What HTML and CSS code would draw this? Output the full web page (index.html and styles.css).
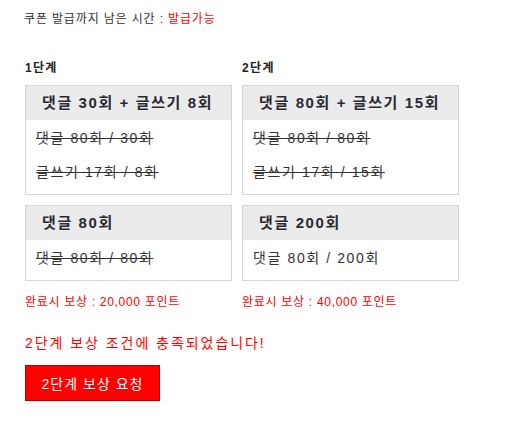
FILE: index.html
```html
<!DOCTYPE html>
<html lang="ko">
<head>
<meta charset="utf-8">
<link rel="stylesheet" href="styles.css">
</head>
<body>
<div class="page">
  <p class="timer">쿠폰 발급까지 남은 시간 : <span class="red">발급가능</span></p>
  <div class="steps">
    <div class="col">
      <div class="label">1단계</div>
      <div class="box">
        <div class="head">댓글 30회 + 글쓰기 8회</div>
        <div class="body">
          <div class="line done">댓글 80회 / 30회</div>
          <div class="line done">글쓰기 17회 / 8회</div>
        </div>
      </div>
      <div class="box">
        <div class="head">댓글 80회</div>
        <div class="body">
          <div class="line done">댓글 80회 / 80회</div>
        </div>
      </div>
      <div class="reward">완료시 보상 : 20,000 포인트</div>
    </div>
    <div class="col">
      <div class="label">2단계</div>
      <div class="box">
        <div class="head">댓글 80회 + 글쓰기 15회</div>
        <div class="body">
          <div class="line done">댓글 80회 / 80회</div>
          <div class="line done">글쓰기 17회 / 15회</div>
        </div>
      </div>
      <div class="box">
        <div class="head">댓글 200회</div>
        <div class="body">
          <div class="line">댓글 80회 / 200회</div>
        </div>
      </div>
      <div class="reward">완료시 보상 : 40,000 포인트</div>
    </div>
  </div>
  <p class="msg">2단계 보상 조건에 충족되었습니다!</p>
  <button class="btn" type="button">2단계 보상 요청</button>
</div>
</body>
</html>
```
FILE: styles.css
```css
html, body {
  margin: 0;
  padding: 0;
  background: #fff;
}
body {
  font-family: "Liberation Sans", "Noto Sans CJK KR", sans-serif;
  color: #333;
}
.page {
  padding: 11px 0 0 25px;
}
.timer {
  margin: 0 0 0 -1px;
  font-size: 12px;
  line-height: 16px;
  letter-spacing: 0.85px;
}
.red {
  color: #ff0000;
}
.steps {
  display: flex;
  gap: 10px;
  margin-top: 33px;
  align-items: flex-start;
}
.col {
  display: flex;
  flex-direction: column;
}
.label {
  font-size: 12px;
  font-weight: bold;
  line-height: 16px;
  margin-bottom: 9px;
  color: #222;
  letter-spacing: 1.3px;
}
.box {
  border: 1px solid #d6d6d6;
  margin-bottom: 10px;
}
.head {
  background: #ebebeb;
  height: 34px;
  line-height: 34px;
  font-size: 15px;
  font-weight: bold;
  padding: 0 18px 0 16px;
  white-space: nowrap;
  color: #2a2a33;
  letter-spacing: 1.6px;
}
.body {
  padding: 8px 10px 12px;
}
.line {
  font-size: 14px;
  line-height: 20px;
  white-space: nowrap;
  letter-spacing: 1.6px;
}
.line + .line {
  margin-top: 14px;
}
.done {
  text-decoration: line-through;
}
.reward {
  color: #ff0000;
  font-size: 12px;
  line-height: 16px;
  margin-top: 3px;
  letter-spacing: 0.7px;
}
.msg {
  margin: 23px 0 0;
  color: #ff0000;
  font-size: 14px;
  line-height: 20px;
  letter-spacing: 1.95px;
}
.btn {
  margin-top: 12px;
  width: 135px;
  height: 36px;
  background: #ff0000;
  border: 1px solid #c00000;
  color: #fff;
  font-family: inherit;
  font-size: 14px;
  padding: 0;
  letter-spacing: 1px;
}
```
